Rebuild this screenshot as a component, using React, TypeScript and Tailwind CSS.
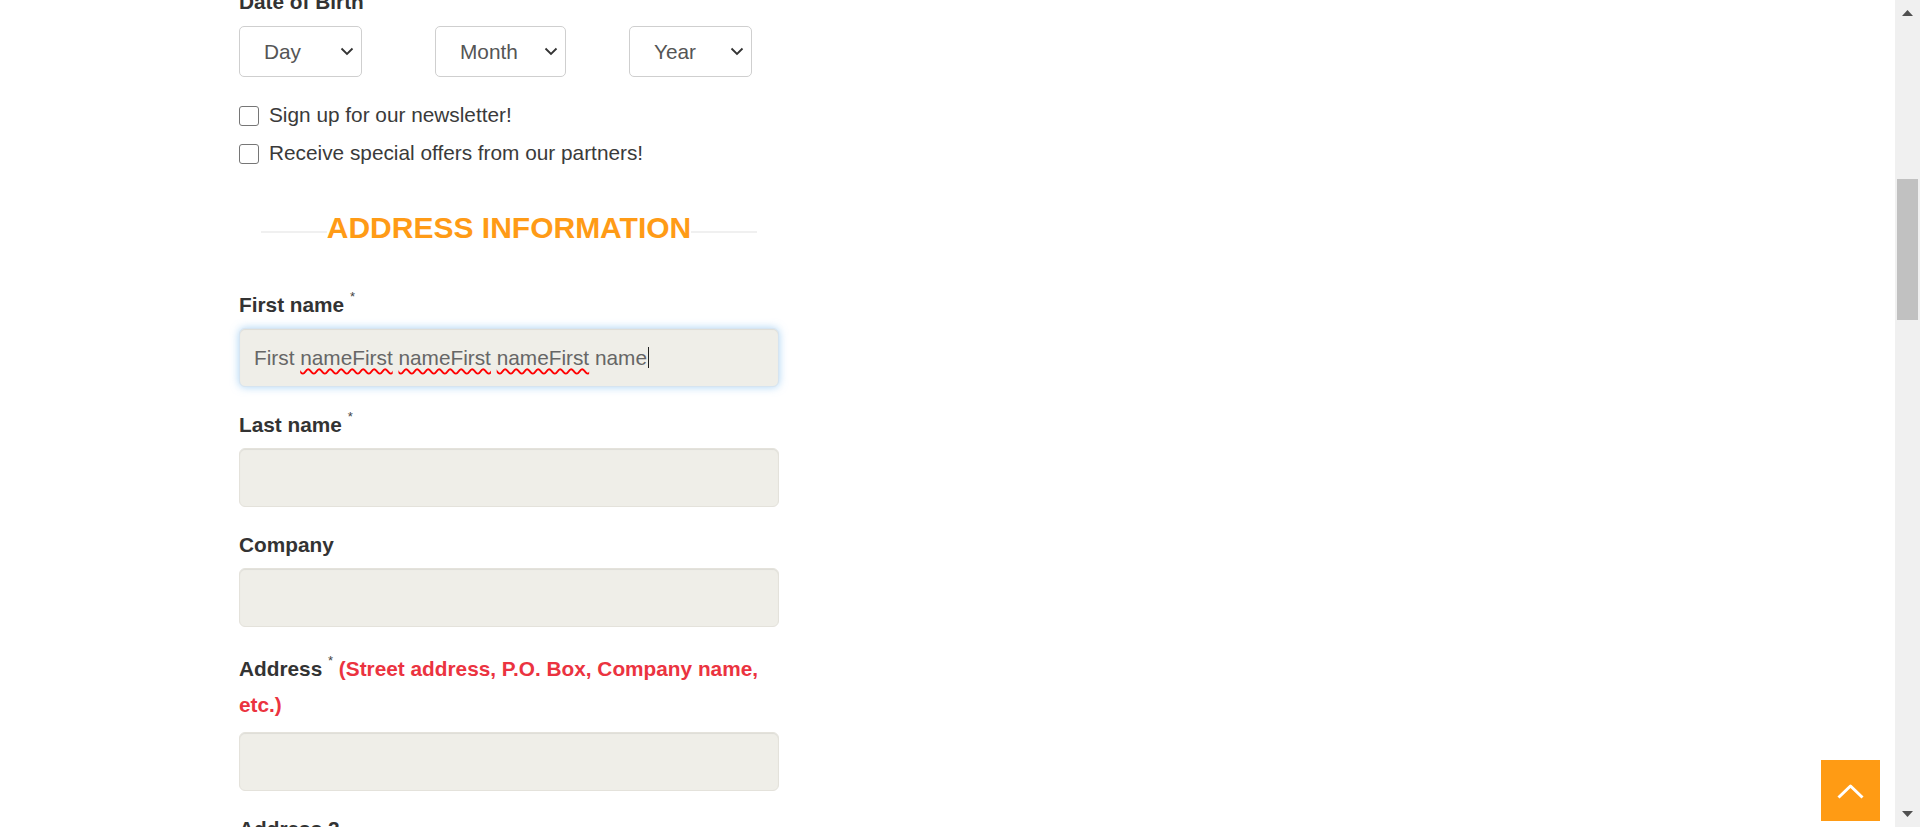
import React from "react";

const Chevron = () => (
  <svg width="14" height="9" viewBox="0 0 14 9" className="shrink-0">
    <polyline points="1.5,1.5 7,7 12.5,1.5" fill="none" stroke="#333" strokeWidth="1.8" />
  </svg>
);

function FakeSelect({ text, w }: { text: string; w: string }) {
  return (
    <div
      className={`${w} h-[51px] bg-white border border-[#cfcfcf] rounded-[5px] flex items-center justify-between pl-[24px] pr-[7px] text-[#555] text-[20.8px]`}
    >
      <span>{text}</span>
      <Chevron />
    </div>
  );
}

function Checkbox({ text }: { text: string }) {
  return (
    <div className="h-[38px] flex items-center">
      <span className="w-[20px] h-[20px] mt-[2px] rounded-[3px] border-[1.5px] border-[#767676] bg-white shrink-0" />
      <span className="ml-[10px] text-[20.8px] text-[#3a3a3a]">{text}</span>
    </div>
  );
}

const Req = () => (
  <sup className="text-[13px] font-normal text-[#444] relative top-[-11px]">*</sup>
);

function Input({ children, focused }: { children?: React.ReactNode; focused?: boolean }) {
  return (
    <div
      className={
        focused
          ? "h-[59.4px] rounded-[6px] bg-[#efeee8] border border-[#d6e4f0] shadow-[inset_0_1px_1px_rgba(0,0,0,0.075),0_0_8px_rgba(102,175,233,0.55)] flex items-center pl-[14px] text-[20.8px] text-[#666]"
          : "h-[59.4px] rounded-[6px] bg-[#efeee8] border border-[#e4e2db] shadow-[inset_0_1px_1px_rgba(0,0,0,0.075)]"
      }
    >
      {children}
    </div>
  );
}

const labelCls = "block font-bold text-[#333] text-[20.8px] leading-[36.4px]";
const sq = "underline decoration-wavy decoration-[#ff0000] decoration-[1.5px] underline-offset-[3px]";

export default function App() {
  return (
    <div className="w-full h-[827px] overflow-hidden flex bg-white font-['Liberation_Sans',Arial,sans-serif]">
      <main className="flex-1 relative overflow-hidden">
        <div className="pl-[239px] w-[779px]">
          <div className={`${labelCls} mt-[-16.5px]`}>Date of Birth</div>
          <div className="mt-[6px] flex">
            <div className="w-[196px]">
              <FakeSelect text="Day" w="w-[123px]" />
            </div>
            <div className="w-[194px]">
              <FakeSelect text="Month" w="w-[131px]" />
            </div>
            <div>
              <FakeSelect text="Year" w="w-[123px]" />
            </div>
          </div>

          <div className="mt-[19px]">
            <Checkbox text="Sign up for our newsletter!" />
            <Checkbox text="Receive special offers from our partners!" />
          </div>

          <div className="mt-[39px] mx-[22px] flex items-center">
            <div className="flex-1 h-[2px] bg-[#f0f0f0] mt-[8px]" />
            <h2 className="whitespace-nowrap text-[30px] leading-[34px] font-bold text-[#ff9b16]">
              ADDRESS INFORMATION
            </h2>
            <div className="flex-1 h-[2px] bg-[#f0f0f0] mt-[8px]" />
          </div>

          <div className="mt-[42px] flex flex-col gap-[19.9px]">
            <div>
              <label className={`${labelCls} mb-[4.3px]`}>
                First name <Req />
              </label>
              <Input focused>
                <span className="whitespace-pre">
                  First <span className={sq}>nameFirst</span> <span className={sq}>nameFirst</span>{" "}
                  <span className={sq}>nameFirst</span> name
                </span>
                <span className="ml-[1px] w-[1px] h-[21px] bg-[#222]" />
              </Input>
            </div>
            <div>
              <label className={`${labelCls} mb-[4.3px]`}>
                Last name <Req />
              </label>
              <Input />
            </div>
            <div>
              <label className={`${labelCls} mb-[4.3px]`}>Company</label>
              <Input />
            </div>
            <div>
              <label className={`${labelCls} pt-[4px] pb-[4px] mb-[4.3px]`}>
                Address <Req /> <span className="text-[#eb3340]">(Street address, P.O. Box, Company name, etc.)</span>
              </label>
              <Input />
            </div>
            <div>
              <label className={`${labelCls} mb-[4.3px]`}>Address 2</label>
              <Input />
            </div>
          </div>
        </div>

        <button className="absolute right-[15px] bottom-[6px] w-[59px] h-[61px] bg-[#ff9b14] flex items-center justify-center pt-[2px]">
          <svg width="29" height="17" viewBox="0 0 29 17">
            <polyline points="2.5,14.5 14.5,3 26.5,14.5" fill="none" stroke="#fff" strokeWidth="3" strokeLinejoin="round" />
          </svg>
        </button>
      </main>

      <div className="w-[25px] shrink-0 bg-[#f0f0f0] flex flex-col">
        <div className="h-[25px] flex items-start justify-center pt-[10px]">
          <svg width="11" height="6" viewBox="0 0 11 6">
            <polygon points="0,6 5.5,0 11,6" fill="#505050" />
          </svg>
        </div>
        <div className="h-[154px]" />
        <div className="h-[141px] mx-[2px] bg-[#c1c1c1]" />
        <div className="flex-1" />
        <div className="h-[25px] flex items-end justify-center pb-[10px]">
          <svg width="11" height="6" viewBox="0 0 11 6">
            <polygon points="0,0 11,0 5.5,6" fill="#505050" />
          </svg>
        </div>
      </div>
    </div>
  );
}
